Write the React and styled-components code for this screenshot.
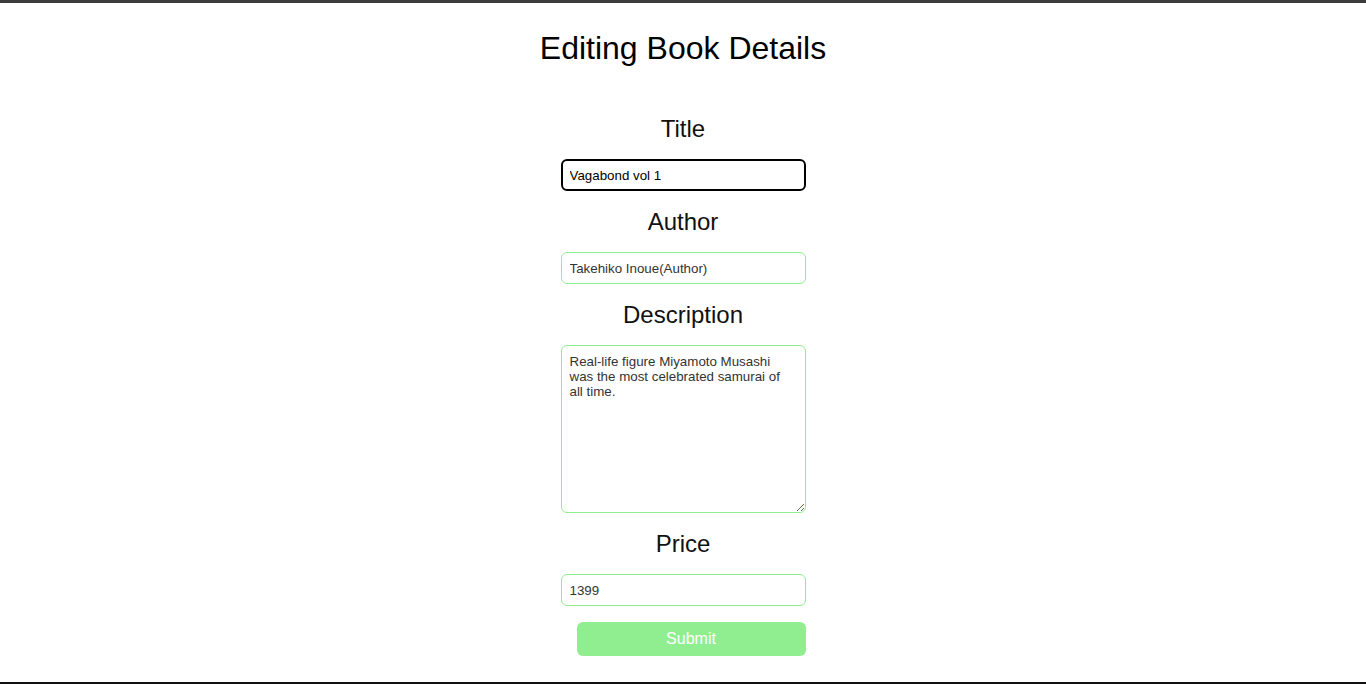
import React from "react";
import styled, { createGlobalStyle } from "styled-components";

const GlobalStyle = createGlobalStyle`
  html, body {
    margin: 0;
    padding: 0;
    background: #fff;
  }
  body {
    font-family: "Liberation Sans", Arial, sans-serif;
  }
  * {
    box-sizing: border-box;
  }
`;

const EditBook = () => {
  const [book, setBook] = React.useState({
    title: "Vagabond vol 1",
    author: "Takehiko Inoue(Author)",
    description:
      "Real-life figure Miyamoto Musashi was the most celebrated samurai of all time.",
    price: "1399",
  });

  const update = (key) => (e) => setBook({ ...book, [key]: e.target.value });

  return (
    <Page>
      <GlobalStyle />
      <Heading>Editing Book Details</Heading>
      <Form onSubmit={(e) => e.preventDefault()}>
        <Label>Title</Label>
        <Input active value={book.title} onChange={update("title")} />
        <Label>Author</Label>
        <Input value={book.author} onChange={update("author")} />
        <Label>Description</Label>
        <TextArea value={book.description} onChange={update("description")} />
        <Label>Price</Label>
        <Input value={book.price} onChange={update("price")} />
        <Submit type="submit">Submit</Submit>
      </Form>
    </Page>
  );
};

export default EditBook;

const Page = styled.div`
  min-height: 100vh;
  border-top: 3px solid #3c3c3c;
  border-bottom: 2px solid #111;
  display: flex;
  flex-direction: column;
  align-items: center;
`;

const Heading = styled.h1`
  margin: 27px 0 32px;
  font-size: 32px;
  line-height: 36px;
  font-weight: 400;
  color: #000;
`;

const Form = styled.form`
  display: flex;
  flex-direction: column;
  align-items: center;
  width: 245px;
`;

const Label = styled.h2`
  margin: 17px 0 16px;
  font-size: 24px;
  line-height: 28px;
  font-weight: 400;
  color: #111;
`;

const Input = styled.input`
  width: 245px;
  height: 32px;
  padding: 0 8px;
  font-family: "Liberation Sans", Arial, sans-serif;
  font-size: 13.33px;
  color: ${(p) => (p.active ? "#000" : "#333")};
  border: ${(p) => (p.active ? "2px solid #000" : "1px solid #90ee90")};
  padding-left: ${(p) => (p.active ? "7px" : "8px")};
  border-radius: 6px;
  outline: none;
  background: #fff;
`;

const TextArea = styled.textarea`
  width: 245px;
  height: 168px;
  padding: 8px;
  font-family: "Liberation Sans", Arial, sans-serif;
  font-size: 13.33px;
  line-height: 15px;
  color: #333;
  border: 1px solid #90ee90;
  border-radius: 6px;
  outline: none;
  resize: vertical;
  background: #fff;
`;

const Submit = styled.button`
  align-self: flex-end;
  width: 229px;
  height: 34px;
  margin-top: 16px;
  background: #90ee90;
  color: #fff;
  border: none;
  border-radius: 6px;
  font-family: "Liberation Sans", Arial, sans-serif;
  font-size: 16px;
  cursor: pointer;
`;
